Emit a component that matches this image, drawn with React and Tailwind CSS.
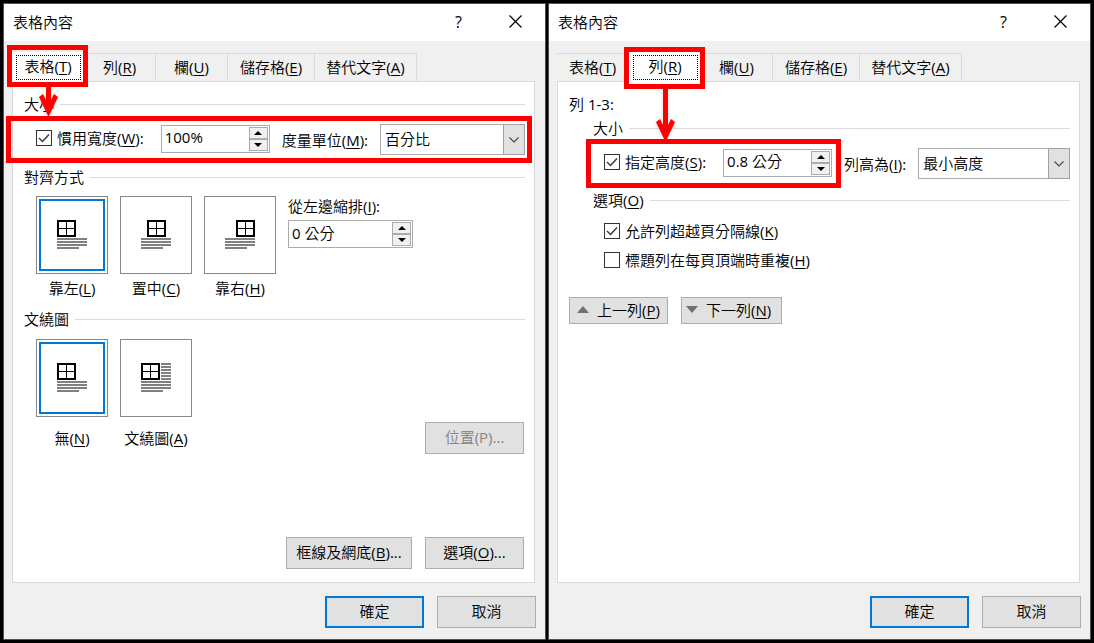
import React, { useState } from 'react';

// Label with its access key underlined, e.g. 列(R)
const KeyText = ({ text, k, after = '' }) => (
  <span className="whitespace-nowrap">
    {text}(<span className="underline underline-offset-2">{k}</span>){after}
  </span>
);

const CheckBox = ({ id, checked, onChange, children }) => (
  <div className="flex shrink-0 items-center gap-[5px] pb-[3px]">
    <span className="relative flex h-4 w-4">
      <input
        id={id}
        type="checkbox"
        checked={checked}
        onChange={(e) => onChange(e.target.checked)}
        className="h-4 w-4 appearance-none border border-[#333333] bg-white"
      />
      {checked && (
        <svg viewBox="0 0 16 16" className="pointer-events-none absolute inset-0 h-4 w-4">
          <path d="M3 8 L6.5 11.5 L13 4.5" fill="none" stroke="#333333" strokeWidth="1.4" />
        </svg>
      )}
    </span>
    <label htmlFor={id}>{children}</label>
  </div>
);

const SpinBox = ({ id, label, value, onChange, step = 1, width }) => {
  // Keep the unit that was typed after the number
  const change = (delta) => {
    const number = parseFloat(value) || 0;
    const unit = value.replace(/^[\d.]+/, '');
    const next = Math.max(0, Math.round((number + delta) * 10) / 10);
    onChange(`${next}${unit}`);
  };

  return (
    <div className={`mb-0.5 flex h-7 shrink-0 border border-[#ababab] bg-white p-px ${width}`}>
      <input
        id={id}
        type="text"
        aria-label={label}
        value={value}
        onChange={(e) => onChange(e.target.value)}
        className="h-[22px] min-w-0 flex-1 pb-0.5 pl-[2px] leading-5 outline-none"
      />
      <div className="flex w-[19px] flex-col">
        <button
          type="button"
          aria-label="+"
          onClick={() => change(step)}
          className="flex flex-1 items-center justify-center border border-[#ababab] bg-[#f0f0f0]"
        >
          <svg width="8" height="4" viewBox="0 0 8 4"><path d="M0 4 L4 0 L8 4 Z" /></svg>
        </button>
        <button
          type="button"
          aria-label="-"
          onClick={() => change(-step)}
          className="flex flex-1 items-center justify-center border border-[#ababab] bg-[#f0f0f0]"
        >
          <svg width="8" height="4" viewBox="0 0 8 4"><path d="M0 0 L4 4 L8 0 Z" /></svg>
        </button>
      </div>
    </div>
  );
};

const ComboBox = ({ id, options }) => (
  <div className="relative min-w-0 flex-1">
    <select
      id={id}
      className="h-[31px] w-full appearance-none rounded-none border border-[#ababab] bg-white pb-0.5 pl-1 pr-6 outline-none"
    >
      {options.map((option) => (
        <option key={option}>{option}</option>
      ))}
    </select>
    <span className="pointer-events-none absolute inset-y-0 right-0 flex w-[22px] items-center justify-center border border-[#a0a0a8] bg-[#e1e1e1]">
      <svg width="10" height="6" viewBox="0 0 10 6">
        <path d="M0.5 0.5 L5 5 L9.5 0.5" fill="none" stroke="#444444" strokeWidth="1.1" />
      </svg>
    </span>
  </div>
);

const Legend = ({ children }) => (
  <div className="flex items-center gap-[6px]">
    <span>{children}</span>
    <span className="h-px flex-1 bg-[#dcdcdc]" />
  </div>
);

const Button = ({ className, disabled, primary, children }) => (
  <button
    type="button"
    disabled={disabled}
    className={`bg-[#e1e1e1] pb-0.5 ${primary ? 'border-2 border-[#0078d7]' : 'border border-[#adadad]'} ${
      disabled ? 'text-[#838383]' : ''
    } ${className}`}
  >
    {children}
  </button>
);

// Small table with paragraph lines, 72x78
const Thumb = ({ tableX, selected, wrap }) => (
  <svg width="72" height="78" viewBox="0 0 72 78" shapeRendering="crispEdges">
    <rect x="0.5" y="0.5" width="71" height="77" fill="white" stroke="#838790" />
    {selected && <rect x="4" y="4" width="64" height="70" fill="none" stroke="#0078d7" strokeWidth="2" />}
    <rect x={tableX + 1} y="25" width="17" height="15" fill="white" stroke="black" strokeWidth="2" />
    <rect x={tableX + 9} y="25" width="1" height="15" />
    <rect x={tableX + 1} y="32" width="17" height="1" />
    {wrap &&
      [24, 27, 30, 33, 36, 39].map((y) => (
        <rect key={y} x="41" y={y} width="10" height="2" fill="#808080" />
      ))}
    {[42, 45, 48].map((y) => (
      <rect key={y} x="21" y={y} width="30" height="2" fill="#808080" />
    ))}
    <rect x="21" y="51" width="22" height="2" fill="#808080" />
  </svg>
);

const ThumbGroup = ({ name, items, value, onChange, gap }) => (
  <div className="flex gap-3">
    {items.map((item) => (
      <label key={item.k} className={`flex w-[72px] flex-col items-center ${gap}`}>
        <input
          type="radio"
          name={name}
          checked={value === item.k}
          onChange={() => onChange(item.k)}
          className="sr-only"
        />
        <Thumb tableX={item.tableX} wrap={item.wrap} selected={value === item.k} />
        <KeyText text={item.text} k={item.k} />
      </label>
    ))}
  </div>
);

const DownArrow = ({ height }) => (
  <svg
    width="20"
    height={height}
    viewBox={`0 0 20 ${height}`}
    className="absolute left-1/2 top-full -translate-x-1/2 overflow-visible drop-shadow-sm"
  >
    <path
      d={`M8 0 H13 V${height - 16} L16 ${height - 22} L20 ${height - 19} L10.5 ${height + 1} L1 ${height - 19} L5 ${height - 22} L8 ${height - 16} Z`}
      fill="#ff0000"
    />
  </svg>
);

const tabs = [
  { text: '表格', k: 'T', width: 'w-[72px]' },
  { text: '列', k: 'R', width: 'w-[72px]' },
  { text: '欄', k: 'U', width: 'w-[72px]' },
  { text: '儲存格', k: 'E', width: 'w-[87px]' },
  { text: '替代文字', k: 'A', width: 'w-[102px]' },
];

const Dialog = ({ active, callout, arrowHeight, children }) => (
  <section className="flex min-w-0 flex-1 flex-col border border-[#505050] bg-[#f0f0f0]">
    <header className="flex h-[37px] items-center bg-white pb-0.5 pl-[9px] pr-[23px]">
      <h2 className="flex-1">表格內容</h2>
      <button type="button" className="mr-[47px] text-base">?</button>
      <button type="button" aria-label="關閉">
        <svg width="13" height="13" viewBox="0 0 13 13">
          <path d="M0.5 0.5 L12.5 12.5 M12.5 0.5 L0.5 12.5" stroke="black" strokeWidth="1.2" />
        </svg>
      </button>
    </header>

    <div className="flex flex-1 flex-col pl-2 pr-[10px] pt-3">
      <div role="tablist" className="flex h-7">
        {tabs.map((tab) =>
          tab.k === active ? (
            <button
              key={tab.k}
              type="button"
              role="tab"
              aria-selected="true"
              className={`relative z-10 -mb-px -mt-px flex items-center justify-center bg-white ${tab.width}`}
            >
              <span className="flex h-[25px] w-[65px] items-center justify-center border border-dotted border-black pb-0.5">
                <KeyText text={tab.text} k={tab.k} />
              </span>
              <span className={`pointer-events-none absolute h-[42px] w-[81px] border-[5px] border-[#ff0000] ${callout}`}>
                <DownArrow height={arrowHeight} />
              </span>
            </button>
          ) : (
            <button
              key={tab.k}
              type="button"
              role="tab"
              aria-selected="false"
              className={`border-r border-t border-[#d9d9d9] pb-0.5 ${tab.width}`}
            >
              <KeyText text={tab.text} k={tab.k} />
            </button>
          )
        )}
      </div>
      <div role="tabpanel" className="flex flex-1 flex-col border border-[#d9d9d9] bg-white pb-[13px] pl-[11px] pr-[9px] pt-3">
        {children}
      </div>
    </div>

    <footer className="flex justify-end gap-[13px] pb-[11px] pr-[9px] pt-[13px]">
      <Button primary className="h-8 w-[99px]">確定</Button>
      <Button className="h-8 w-[99px]">取消</Button>
    </footer>
  </section>
);

const TableTab = () => {
  const [useWidth, setUseWidth] = useState(true);
  const [width, setWidth] = useState('100%');
  const [indent, setIndent] = useState('0 公分');
  const [align, setAlign] = useState('L');
  const [wrap, setWrap] = useState('N');

  return (
    <Dialog active="T" callout="-left-[5px] -top-[7px]" arrowHeight={34}>
      <Legend>大小</Legend>
      <div className="relative mt-[10px] flex items-center pl-3">
        <CheckBox id="use-width" checked={useWidth} onChange={setUseWidth}>
          <KeyText text="慣用寬度" k="W" after=":" />
        </CheckBox>
        <div className="w-[17px]" />
        <SpinBox label="慣用寬度" value={width} onChange={setWidth} width="w-[109px]" />
        <label htmlFor="unit" className="mx-3"><KeyText text="度量單位" k="M" after=":" /></label>
        <ComboBox id="unit" options={['百分比', '公分']} />
        <span className="pointer-events-none absolute -inset-y-2 -left-[18px] -right-[7px] border-[5px] border-[#ff0000]" />
      </div>

      <div className="mt-3"><Legend>對齊方式</Legend></div>
      <div className="mt-[9px] flex gap-3 pl-3">
        <ThumbGroup
          name="align"
          gap="gap-1"
          value={align}
          onChange={setAlign}
          items={[
            { text: '靠左', k: 'L', tableX: 21 },
            { text: '置中', k: 'C', tableX: 27 },
            { text: '靠右', k: 'H', tableX: 32 },
          ]}
        />
        <div className="flex flex-col gap-1">
          <label htmlFor="indent"><KeyText text="從左邊縮排" k="I" after=":" /></label>
          <SpinBox id="indent" value={indent} onChange={setIndent} width="w-[125px]" />
        </div>
      </div>

      <div className="mt-[11px]"><Legend>文繞圖</Legend></div>
      <div className="mt-[10px] flex justify-between pl-3 pr-px">
        <ThumbGroup
          name="wrap"
          gap="gap-[11px]"
          value={wrap}
          onChange={setWrap}
          items={[
            { text: '無', k: 'N', tableX: 21 },
            { text: '文繞圖', k: 'A', tableX: 21, wrap: true },
          ]}
        />
        <div className="pt-[83px]">
          <Button disabled className="h-8 w-[99px]">位置(P)...</Button>
        </div>
      </div>

      <div className="mt-auto flex justify-end gap-[13px] pr-px">
        <Button className="h-8 w-[126px]"><KeyText text="框線及網底" k="B" after="..." /></Button>
        <Button className="h-8 w-[99px]"><KeyText text="選項" k="O" after="..." /></Button>
      </div>
    </Dialog>
  );
};

const RowTab = () => {
  const [useHeight, setUseHeight] = useState(true);
  const [height, setHeight] = useState('0.8 公分');
  const [allowBreak, setAllowBreak] = useState(true);
  const [repeatHeader, setRepeatHeader] = useState(false);

  return (
    <Dialog active="R" callout="-left-[5px] -top-[5px]" arrowHeight={57}>
      <p>列 1-3:</p>
      <div className="mt-1 pl-6">
        <Legend>大小</Legend>
        <div className="mt-[10px] flex items-center pl-[11px]">
          <div className="relative flex h-[31px] items-center">
            <CheckBox id="use-height" checked={useHeight} onChange={setUseHeight}>
              <KeyText text="指定高度" k="S" after=":" />
            </CheckBox>
            <div className="w-[17px]" />
            <SpinBox label="指定高度" step={0.1} value={height} onChange={setHeight} width="w-[109px]" />
            <span className="pointer-events-none absolute -inset-y-[9px] -left-[18px] -right-[9px] border-[5px] border-[#ff0000]" />
          </div>
          <label htmlFor="row-height" className="mx-3"><KeyText text="列高為" k="I" after=":" /></label>
          <ComboBox id="row-height" options={['最小高度', '固定高度']} />
        </div>

        <div className="mt-[11px]"><Legend><KeyText text="選項" k="O" /></Legend></div>
        <div className="mt-[11px] flex flex-col gap-[6px] pl-[11px]">
          <CheckBox id="allow-break" checked={allowBreak} onChange={setAllowBreak}>
            <KeyText text="允許列超越頁分隔線" k="K" />
          </CheckBox>
          <CheckBox id="repeat-header" checked={repeatHeader} onChange={setRepeatHeader}>
            <KeyText text="標題列在每頁頂端時重複" k="H" />
          </CheckBox>
        </div>
      </div>

      <div className="mt-6 flex gap-[13px]">
        <Button className="flex h-[27px] w-[99px] items-center justify-center gap-2">
          <svg width="12" height="7" viewBox="0 0 12 7"><path d="M0 7 L6 0 L12 7 Z" fill="#707070" /></svg>
          <KeyText text="上一列" k="P" />
        </Button>
        <Button className="flex h-[27px] w-[101px] items-center gap-2 pl-1">
          <svg width="12" height="7" viewBox="0 0 12 7"><path d="M0 0 L6 7 L12 0 Z" fill="#707070" /></svg>
          <KeyText text="下一列" k="N" />
        </Button>
      </div>
    </Dialog>
  );
};

export default function App() {
  return (
    <main className="flex min-h-screen flex-col gap-[2px] bg-black p-[3px] font-['Open_Sans','Noto_Sans_CJK_TC_DemiLight','Noto_Sans_CJK_TC',sans-serif] text-[15px] leading-5 text-black md:flex-row">
      <TableTab />
      <RowTab />
    </main>
  );
}
